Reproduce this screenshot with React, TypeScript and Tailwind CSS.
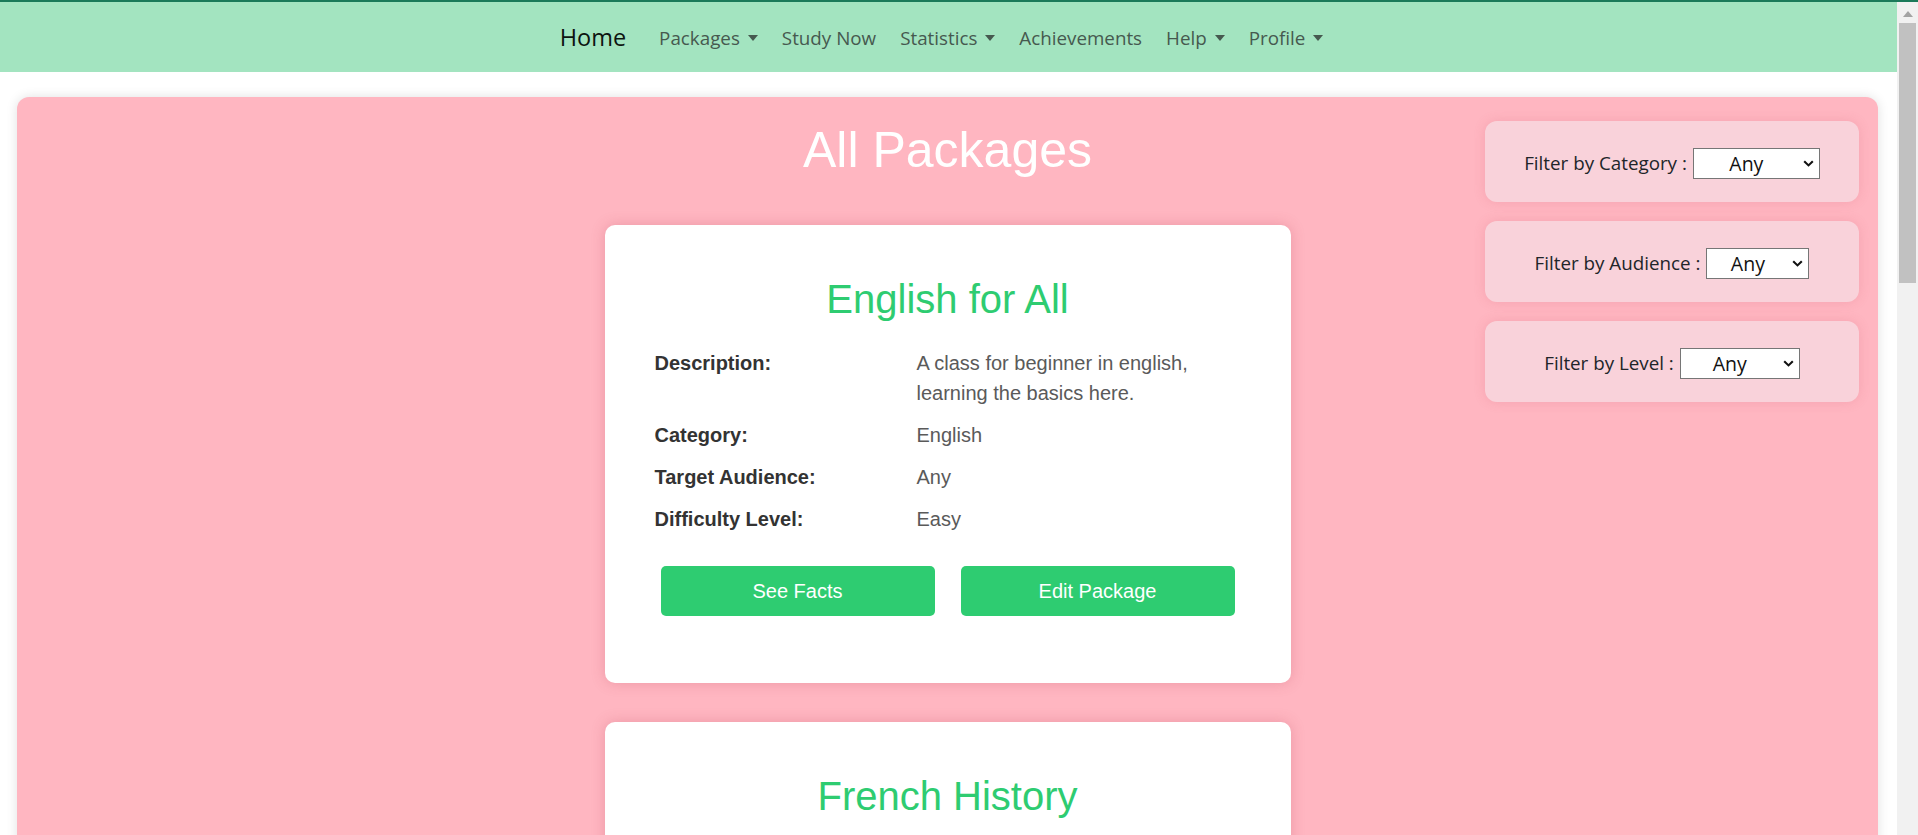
import React from "react";

const SEGOE = { fontFamily: '"Open Sans", "Noto Sans", sans-serif' };
const ARIAL = { fontFamily: '"Liberation Sans", Arial, sans-serif' };

function Caret() {
  return (
    <span className="ml-[8px] inline-block h-0 w-0 border-x-[5.5px] border-t-[6px] border-x-transparent border-t-[#46594f] align-middle" />
  );
}

function NavItem({ label, dropdown }: { label: string; dropdown?: boolean }) {
  return (
    <span className="flex items-center text-[18.8px] text-[#46594f]">
      {label}
      {dropdown && <Caret />}
    </span>
  );
}

function Filter({ label, width }: { label: string; width: string }) {
  return (
    <div className="flex h-[81px] items-center justify-center rounded-[12px] bg-[#f9d2da] pt-[3px] shadow-[0_0_12px_rgba(200,80,100,0.18)]">
      <span className="text-[18.8px] text-[#212529]" style={SEGOE}>
        {label}
      </span>
      <div className={`relative ml-[6px] h-[31px] ${width}`}>
        <select
          className="h-full w-full appearance-none border border-[#767676] bg-white pr-[20px] text-center text-[19.5px] text-[#111]"
          style={{ ...SEGOE, textAlignLast: "center" }}
          defaultValue="Any"
        >
          <option>Any</option>
        </select>
        <svg
          className="pointer-events-none absolute right-[6px] top-[12px]"
          width="11"
          height="7"
          viewBox="0 0 11 7"
        >
          <path d="M1.2 1.2 L5.5 5.4 L9.8 1.2" fill="none" stroke="#111" strokeWidth="2.1" />
        </svg>
      </div>
    </div>
  );
}

function Row({ label, value }: { label: string; value: string }) {
  return (
    <>
      <div className="py-[6px] text-[20px] font-bold leading-[30px] text-[#333]">{label}</div>
      <div className="py-[6px] text-[20px] leading-[30px] text-[#5a5a5a]">{value}</div>
    </>
  );
}

function Card({
  title,
  rows,
}: {
  title: string;
  rows?: { description: string; category: string; audience: string; level: string };
}) {
  return (
    <div
      className={`rounded-[10px] bg-white px-[50px] pt-[50px] shadow-[0_0_14px_rgba(180,60,80,0.25)] ${
        rows ? "pb-[67px]" : "pb-[300px]"
      }`}
      style={ARIAL}
    >
      <h2 className="text-center text-[40px] leading-[48px] text-[#2ecc71]">{title}</h2>
      {rows && (
        <>
          <div className="mt-[19px] grid grid-cols-[262px_1fr]">
            <Row label="Description:" value={rows.description} />
            <Row label="Category:" value={rows.category} />
            <Row label="Target Audience:" value={rows.audience} />
            <Row label="Difficulty Level:" value={rows.level} />
          </div>
          <div className="mt-[26px] grid grid-cols-2 gap-[26px] px-[6px]">
            <button className="h-[50px] rounded-[5px] bg-[#2ecc71] text-[20px] text-white">See Facts</button>
            <button className="h-[50px] rounded-[5px] bg-[#2ecc71] text-[20px] text-white">Edit Package</button>
          </div>
        </>
      )}
    </div>
  );
}

export default function App() {
  return (
    <div className="flex h-[835px] w-full flex-col overflow-hidden bg-white">
      <div className="h-[2px] w-full bg-[#1b7a5a]" />
      <div className="flex min-h-0 flex-1">
        <div className="min-w-0 flex-1 overflow-hidden">
          <nav
            className="flex h-[70px] items-center justify-center gap-[24px] bg-[#a3e4c0] pr-[14px] pt-[2px]"
            style={SEGOE}
          >
            <span className="mr-[9px] text-[23.5px] text-[#0d1410]">Home</span>
            <NavItem label="Packages" dropdown />
            <NavItem label="Study Now" />
            <NavItem label="Statistics" dropdown />
            <NavItem label="Achievements" />
            <NavItem label="Help" dropdown />
            <NavItem label="Profile" dropdown />
          </nav>

          <div className="pl-[17px] pr-[19px] pt-[25px]">
            <div className="grid grid-cols-[1fr_686px_1fr] rounded-[12px] bg-[#ffb6c1] pb-[40px] shadow-[0_0_12px_rgba(0,0,0,0.12)]">
              <div />
              <div className="flex flex-col pt-[23px]">
                <h1 className="text-center text-[50px] leading-[60px] text-white" style={ARIAL}>
                  All Packages
                </h1>
                <div className="mt-[45px] flex flex-col gap-[39px]">
                  <Card
                    title="English for All"
                    rows={{
                      description: "A class for beginner in english, learning the basics here.",
                      category: "English",
                      audience: "Any",
                      level: "Easy",
                    }}
                  />
                  <Card title="French History" />
                </div>
              </div>
              <div className="flex justify-end pr-[19px] pt-[24px]">
                <div className="flex w-[374px] flex-col gap-[19px]">
                  <Filter label="Filter by Category :" width="w-[127px]" />
                  <Filter label="Filter by Audience :" width="w-[103px]" />
                  <Filter label="Filter by Level :" width="w-[120px]" />
                </div>
              </div>
            </div>
          </div>
        </div>

        <div className="flex w-[21px] flex-col items-center bg-[#f1f1f1]">
          <svg className="mt-[9px]" width="10" height="6" viewBox="0 0 10 6">
            <path d="M0 6 L5 0 L10 6 Z" fill="#a3a3a3" />
          </svg>
          <div className="mt-[6px] h-[260px] w-[17px] bg-[#c1c1c1]" />
        </div>
      </div>
    </div>
  );
}
